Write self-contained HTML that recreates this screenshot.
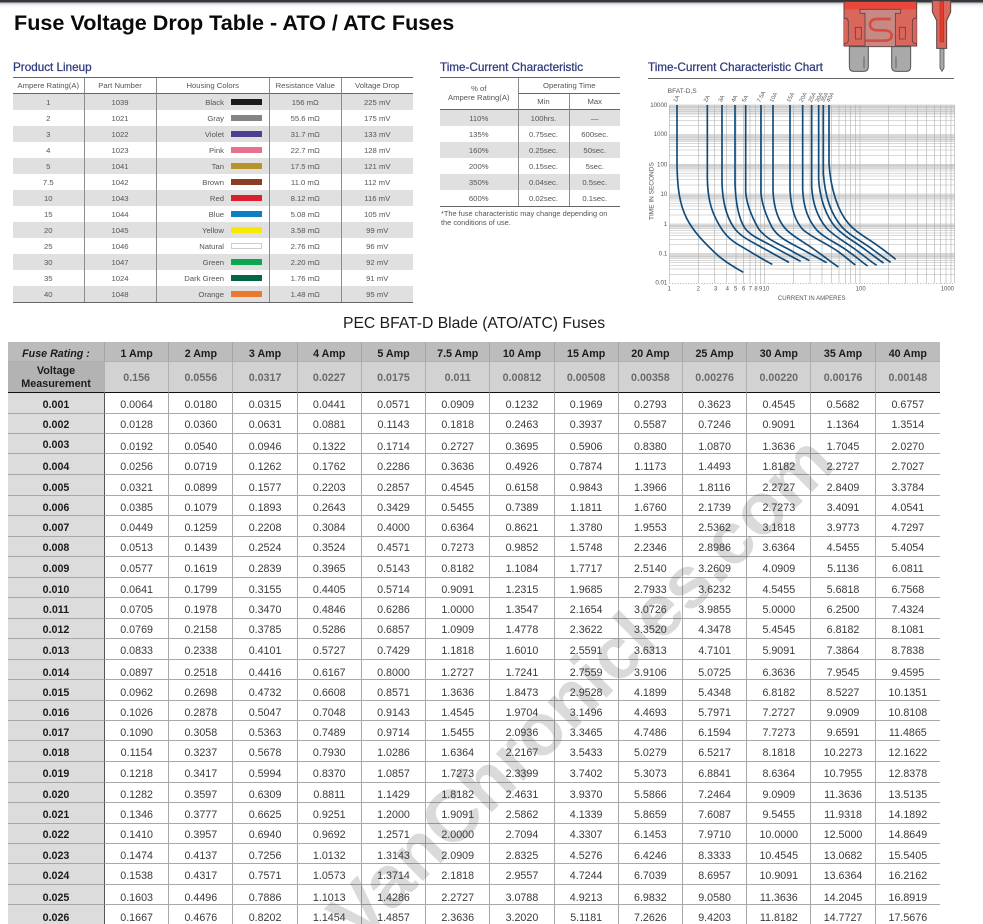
<!DOCTYPE html>
<html>
<head>
<meta charset="utf-8">
<title>Fuse Voltage Drop Table</title>
<style>
html{margin:0;padding:0;background:#fff;width:983px;height:924px;overflow:hidden}
body{margin:0;padding:0;background:#fff;position:relative;width:983px;height:924px;overflow:hidden;font-family:"Liberation Sans",sans-serif;color:#333}
.bar{position:absolute;left:0;top:0;width:983px;height:8px;background:linear-gradient(#2f3337 0,#3b3f43 2px,#c9cacb 3px,#f2f2f2 5px,#fff 8px)}
h1{position:absolute;left:14px;top:9px;margin:0;font-size:21.6px;line-height:27px;font-weight:bold;color:#0a0a0a;white-space:nowrap}
h2{position:absolute;top:61px;margin:0;font-size:11.7px;line-height:14px;font-weight:normal;color:#2e3a7c;white-space:nowrap;-webkit-text-stroke:.25px #2e3a7c}
table{border-collapse:separate;border-spacing:0;table-layout:fixed;position:absolute}
.s{font-size:7.7px;color:#555;text-align:center;border-bottom:1px solid #666;border-top:1px solid #666}
.s td,.s th{font-weight:normal;padding:0;height:16px;box-sizing:border-box;line-height:15px;vertical-align:middle;border-right:1px solid #8c8c8c;white-space:nowrap}
.s td:last-child,.s th:last-child{border-right:0}
.s thead th{border-bottom:1px solid #666}
.s tbody tr:nth-child(odd) td{background:#e0e0e0}
.c{text-align:right!important;padding-right:7px!important}
.c i{display:inline-block;width:31px;height:6px;margin-left:7px;vertical-align:-.5px;box-sizing:border-box}
.foot{position:absolute;left:441px;top:210px;font-size:7.4px;line-height:8.5px;color:#555;white-space:nowrap}
.sub{position:absolute;left:343px;top:314px;font-size:15.7px;line-height:19px;color:#1c1c1c;white-space:nowrap}
.m{left:8px;top:342px;width:932px;font-size:10.7px;color:#3a3a3a;text-align:center}
.m td,.m th{padding:0;border-right:1px solid #a8a8a8;border-bottom:1px solid #a8a8a8;box-sizing:border-box;vertical-align:top;line-height:12px;overflow:hidden;white-space:nowrap}
.m td:last-child,.m th:last-child{border-right:0}
.m tbody td:first-child{background:#dcdcdc;font-weight:bold;color:#1c1c1c;border-right:1px solid #555}
.m .h1 th{background:#bbbcbb;color:#1c1c1c;height:20px;line-height:13px;padding-top:6px;border-right-color:#a4a4a4;border-bottom:1px solid #b0b0b0}
.m .h1 th:first-child{background:#bbb;font-style:italic}
.m .h2 th{background:#d2d2d2;color:#6a6a6a;height:31px;line-height:28px;padding-top:2px;border-bottom:1px solid #111;border-right-color:#b0b0b0}
.m .h2 th:first-child{background:#b3b3b3;color:#1c1c1c;font-size:10.8px;line-height:13px;padding-top:3px}
.p2 td{padding-top:5px!important}.p3 td{padding-top:6px!important}.p4 td{padding-top:7px!important}
.wm{position:absolute;left:342px;top:883px;width:700px;font-size:73px;line-height:90px;font-weight:bold;color:rgba(60,60,60,.19);white-space:nowrap;transform:rotate(-45deg);transform-origin:0 50%}
svg{position:absolute}
svg text{font-family:"Liberation Sans",sans-serif;fill:#555}
</style>
</head>
<body>
<div class="bar"></div>

<svg style="left:820px;top:0" width="163" height="80" viewBox="0 0 489 240">
  <path d="M72 6H290V138H72Z" fill="#d9675c" stroke="#5e4140" stroke-width="3"/>
  <path d="M74 6H288V28H74Z" fill="#e8473b"/>
  <path d="M120 28V40H135V140H226V40H242V28Z" fill="#c68a86" stroke="#5e4140" stroke-width="2.5"/>
  <path d="M72 55Q84 52 85 66V122Q84 132 72 130" fill="#d9675c" stroke="#5e4140" stroke-width="2.5"/>
  <path d="M290 55Q278 52 277 66V122Q278 132 290 130" fill="#d9675c" stroke="#5e4140" stroke-width="2.5"/>
  <path d="M106 82H124V117H106ZM238 82H256V117H238Z" fill="#d9675c" stroke="#5e4140" stroke-width="2.5"/>
  <path d="M212 57H172C158 57 150 64 150 74C150 85 158 91 172 91H194C208 91 215 98 215 107C215 116 207 122 194 122H136" fill="none" stroke="#d94a3f" stroke-width="8"/>
  <path d="M88 140H145V200Q145 214 132 214H100Q88 214 88 200Z" fill="#a9a9a9" stroke="#555" stroke-width="3"/>
  <path d="M215 140H272V200Q272 214 260 214H228Q215 214 215 200Z" fill="#a9a9a9" stroke="#555" stroke-width="3"/>
  <path d="M132 170V205M228 170V205" stroke="#555" stroke-width="2.5" fill="none"/>
  <path d="M337 2H392V36L380 62V145H350V62L337 36Z" fill="#d9675c" stroke="#5e4140" stroke-width="3"/>
  <path d="M360 4H371V126H360Z" fill="#e8392f" stroke="#7a3b36" stroke-width="1.5"/>
  <path d="M360 146H372V204L366 214L360 204Z" fill="#a9a9a9" stroke="#555" stroke-width="2.5"/>
</svg>

<h1>Fuse Voltage Drop Table - ATO / ATC Fuses</h1>

<h2 style="left:13px">Product Lineup</h2>
<h2 style="left:440px">Time-Current Characteristic</h2>
<h2 style="left:648px">Time-Current Characteristic Chart</h2>
<div style="position:absolute;left:648px;top:78px;width:306px;height:1px;background:#666"></div>

<table class="s" style="left:13px;top:77px;width:400px">
<colgroup><col style="width:71.5px"><col style="width:72px"><col style="width:113.5px"><col style="width:71.5px"><col style="width:71.5px"></colgroup>
<thead><tr><th>Ampere Rating(A)</th><th>Part Number</th><th>Housing Colors</th><th>Resistance Value</th><th>Voltage Drop</th></tr></thead>
<tbody>
<tr><td>1</td><td>1039</td><td class="c">Black<i style="background:#1b1b1d"></i></td><td>156 mΩ</td><td>225 mV</td></tr>
<tr><td>2</td><td>1021</td><td class="c">Gray<i style="background:#848484"></i></td><td>55.6 mΩ</td><td>175 mV</td></tr>
<tr><td>3</td><td>1022</td><td class="c">Violet<i style="background:#4c4190"></i></td><td>31.7 mΩ</td><td>133 mV</td></tr>
<tr><td>4</td><td>1023</td><td class="c">Pink<i style="background:#e8708f"></i></td><td>22.7 mΩ</td><td>128 mV</td></tr>
<tr><td>5</td><td>1041</td><td class="c">Tan<i style="background:#b8952c"></i></td><td>17.5 mΩ</td><td>121 mV</td></tr>
<tr><td>7.5</td><td>1042</td><td class="c">Brown<i style="background:#8a3f22"></i></td><td>11.0 mΩ</td><td>112 mV</td></tr>
<tr><td>10</td><td>1043</td><td class="c">Red<i style="background:#dc1f2e"></i></td><td>8.12 mΩ</td><td>116 mV</td></tr>
<tr><td>15</td><td>1044</td><td class="c">Blue<i style="background:#0b7fc0"></i></td><td>5.08 mΩ</td><td>105 mV</td></tr>
<tr><td>20</td><td>1045</td><td class="c">Yellow<i style="background:#fbe800"></i></td><td>3.58 mΩ</td><td>99 mV</td></tr>
<tr><td>25</td><td>1046</td><td class="c">Natural<i style="background:#fff;border:1px solid #ccc"></i></td><td>2.76 mΩ</td><td>96 mV</td></tr>
<tr><td>30</td><td>1047</td><td class="c">Green<i style="background:#0ca650"></i></td><td>2.20 mΩ</td><td>92 mV</td></tr>
<tr><td>35</td><td>1024</td><td class="c">Dark Green<i style="background:#036644"></i></td><td>1.76 mΩ</td><td>91 mV</td></tr>
<tr><td>40</td><td>1048</td><td class="c">Orange<i style="background:#ea7a30"></i></td><td>1.48 mΩ</td><td>95 mV</td></tr>
</tbody>
</table>

<table class="s" style="left:440px;top:77px;width:180px">
<colgroup><col style="width:78.5px"><col style="width:51px"><col style="width:50.5px"></colgroup>
<thead>
<tr><th rowspan="2" style="line-height:8.5px">% of<br>Ampere Rating(A)</th><th colspan="2">Operating Time</th></tr>
<tr><th>Min</th><th>Max</th></tr>
</thead>
<tbody>
<tr><td>110%</td><td>100hrs.</td><td>—</td></tr>
<tr><td>135%</td><td>0.75sec.</td><td>600sec.</td></tr>
<tr><td>160%</td><td>0.25sec.</td><td>50sec.</td></tr>
<tr><td>200%</td><td>0.15sec.</td><td>5sec.</td></tr>
<tr><td>350%</td><td>0.04sec.</td><td>0.5sec.</td></tr>
<tr><td>600%</td><td>0.02sec.</td><td>0.1sec.</td></tr>
</tbody>
</table>
<div class="foot">*The fuse characteristic may change depending on<br>the conditions of use.</div>

<svg style="left:630px;top:80px" width="353" height="230" viewBox="0 0 1059 690">
  <g fill="#e4e4e4">
    <rect x="118" y="75" width="856" height="28"/>
    <rect x="118" y="165" width="856" height="18"/>
    <rect x="118" y="254" width="856" height="14"/>
    <rect x="118" y="344" width="856" height="14"/>
    <rect x="118" y="433" width="856" height="12"/>
    <rect x="118" y="522" width="856" height="12"/>
  </g>
  <path fill="none" stroke="#a6a6a6" stroke-width="1.6" d="M118 75V610M205 75V610M254 75V610M290 75V610M318 75V610M340 75V610M360 75V610M376 75V610M391 75V610M404 75V610M490 75V610M540 75V610M576 75V610M604 75V610M627 75V610M646 75V610M662 75V610M677 75V610M690 75V610M776 75V610M826 75V610M862 75V610M890 75V610M913 75V610M932 75V610M948 75V610M963 75V610M974 75V610"/>
  <path fill="none" stroke="#b4b4b4" stroke-width="1.6" d="M118 75H974M118 79H974M118 83H974M118 89H974M118 95H974M118 102H974M118 110H974M118 121H974M118 137H974M118 164H974M118 168H974M118 172H974M118 178H974M118 184H974M118 191H974M118 199H974M118 210H974M118 226H974M118 253H974M118 257H974M118 261H974M118 267H974M118 273H974M118 280H974M118 288H974M118 299H974M118 315H974M118 342H974M118 347H974M118 351H974M118 357H974M118 363H974M118 370H974M118 378H974M118 389H974M118 405H974M118 432H974M118 436H974M118 440H974M118 446H974M118 452H974M118 459H974M118 467H974M118 478H974M118 494H974M118 521H974M118 525H974M118 529H974M118 535H974M118 541H974M118 548H974M118 556H974M118 567H974M118 583H974"/>
  <path fill="none" stroke="#888" stroke-width="2" stroke-dasharray="3 5" d="M118 610H974"/>
  <g fill="none" stroke="#0f4c7c" stroke-width="5">
    <path d="M141 75V250C142 330 150 375 170 415C190 455 225 490 262 525C285 545 315 563 340 577"/>
    <path d="M232 75V295C233 345 240 385 262 425C280 460 300 480 330 497C365 517 395 537 427 553"/>
    <path d="M276 75V310C278 370 290 410 310 440C330 470 360 482 395 502C425 518 450 533 477 547"/>
    <path d="M315 75V310C317 370 325 415 345 445C365 470 395 480 430 500C460 517 485 530 512 544"/>
    <path d="M347 75V335C350 375 365 410 385 445C410 480 445 490 480 510C500 522 520 532 538 542"/>
    <path d="M393 75V340C396 375 410 410 425 440C445 475 480 488 520 510C545 524 568 536 590 548"/>
    <path d="M429 75V335C432 385 445 425 470 450C490 470 520 485 555 510C580 528 603 546 625 561"/>
    <path d="M480 75V330C483 385 495 425 520 450C550 475 590 490 625 515C643 528 660 543 676 555"/>
    <path d="M518 75V330C521 385 535 420 560 450C590 480 625 490 660 518C680 532 697 547 713 558"/>
    <path d="M545 75V320C548 375 565 415 590 445C620 475 650 488 685 515C705 530 723 545 740 556"/>
    <path d="M566 75V300C570 360 590 410 615 440C645 472 675 485 710 512C728 525 745 539 761 549"/>
    <path d="M580 75V280C585 350 605 405 635 440C660 468 695 483 730 510C748 523 766 537 782 547"/>
    <path d="M597 75V250C602 330 625 395 655 430C680 460 715 475 750 502C768 515 785 528 797 538"/>
  </g>
  <g font-size="17">
    <text x="113" y="39" font-size="20">BFAT-D,S</text>
    <text transform="translate(139 68) rotate(-62)">1A</text>
    <text transform="translate(230 68) rotate(-62)">2A</text>
    <text transform="translate(274 68) rotate(-62)">3A</text>
    <text transform="translate(313 68) rotate(-62)">4A</text>
    <text transform="translate(345 68) rotate(-62)">5A</text>
    <text transform="translate(390 68) rotate(-62)">7.5A</text>
    <text transform="translate(428 68) rotate(-62)">10A</text>
    <text transform="translate(479 68) rotate(-62)">15A</text>
    <text transform="translate(517 68) rotate(-62)">20A</text>
    <text transform="translate(544 68) rotate(-62)">25A</text>
    <text transform="translate(565 68) rotate(-62)">30A</text>
    <text transform="translate(581 68) rotate(-62)">35A</text>
    <text transform="translate(598 68) rotate(-62)">40A</text>
    <g text-anchor="end" font-size="18.5">
      <text x="112" y="81">10000</text><text x="112" y="168">1000</text><text x="112" y="259">100</text>
      <text x="112" y="348">10</text><text x="112" y="438">1</text><text x="112" y="526">0.1</text><text x="112" y="614">0.01</text>
    </g>
    <g text-anchor="middle" font-size="18">
      <text x="118" y="631">1</text><text x="205" y="631">2</text><text x="257" y="631">3</text><text x="292" y="631">4</text><text x="317" y="631">5</text><text x="341" y="631">6</text><text x="361" y="631">7</text><text x="378" y="631">8</text><text x="392" y="631">9</text><text x="408" y="631">10</text><text x="692" y="631">100</text><text x="952" y="631">1000</text>
      <text x="545" y="660">CURRENT IN AMPERES</text>
    </g>
    <text transform="translate(71 420) rotate(-90)" font-size="19.5">TIME IN SECONDS</text>
  </g>
</svg>

<div class="sub">PEC BFAT-D Blade (ATO/ATC) Fuses</div>

<table class="m">
<colgroup><col style="width:97px"><col span="13" style="width:64.23px"></colgroup>
<thead>
<tr class="h1"><th>Fuse Rating :</th><th>1 Amp</th><th>2 Amp</th><th>3 Amp</th><th>4 Amp</th><th>5 Amp</th><th>7.5 Amp</th><th>10 Amp</th><th>15 Amp</th><th>20 Amp</th><th>25 Amp</th><th>30 Amp</th><th>35 Amp</th><th>40 Amp</th></tr>
<tr class="h2"><th>Voltage<br>Measurement</th><th>0.156</th><th>0.0556</th><th>0.0317</th><th>0.0227</th><th>0.0175</th><th>0.011</th><th>0.00812</th><th>0.00508</th><th>0.00358</th><th>0.00276</th><th>0.00220</th><th>0.00176</th><th>0.00148</th></tr>
</thead>
<tbody>
<tr class="p3" style="height:21px"><td>0.001</td><td>0.0064</td><td>0.0180</td><td>0.0315</td><td>0.0441</td><td>0.0571</td><td>0.0909</td><td>0.1232</td><td>0.1969</td><td>0.2793</td><td>0.3623</td><td>0.4545</td><td>0.5682</td><td>0.6757</td></tr>
<tr class="p2" style="height:20px"><td>0.002</td><td>0.0128</td><td>0.0360</td><td>0.0631</td><td>0.0881</td><td>0.1143</td><td>0.1818</td><td>0.2463</td><td>0.3937</td><td>0.5587</td><td>0.7246</td><td>0.9091</td><td>1.1364</td><td>1.3514</td></tr>
<tr class="p4" style="height:20px"><td style="padding-top:5px!important">0.003</td><td>0.0192</td><td>0.0540</td><td>0.0946</td><td>0.1322</td><td>0.1714</td><td>0.2727</td><td>0.3695</td><td>0.5906</td><td>0.8380</td><td>1.0870</td><td>1.3636</td><td>1.7045</td><td>2.0270</td></tr>
<tr class="p4" style="height:21px"><td>0.004</td><td>0.0256</td><td>0.0719</td><td>0.1262</td><td>0.1762</td><td>0.2286</td><td>0.3636</td><td>0.4926</td><td>0.7874</td><td>1.1173</td><td>1.4493</td><td>1.8182</td><td>2.2727</td><td>2.7027</td></tr>
<tr class="p4" style="height:21px"><td>0.005</td><td>0.0321</td><td>0.0899</td><td>0.1577</td><td>0.2203</td><td>0.2857</td><td>0.4545</td><td>0.6158</td><td>0.9843</td><td>1.3966</td><td>1.8116</td><td>2.2727</td><td>2.8409</td><td>3.3784</td></tr>
<tr class="p3" style="height:20px"><td>0.006</td><td>0.0385</td><td>0.1079</td><td>0.1893</td><td>0.2643</td><td>0.3429</td><td>0.5455</td><td>0.7389</td><td>1.1811</td><td>1.6760</td><td>2.1739</td><td>2.7273</td><td>3.4091</td><td>4.0541</td></tr>
<tr class="p3" style="height:21px"><td>0.007</td><td>0.0449</td><td>0.1259</td><td>0.2208</td><td>0.3084</td><td>0.4000</td><td>0.6364</td><td>0.8621</td><td>1.3780</td><td>1.9553</td><td>2.5362</td><td>3.1818</td><td>3.9773</td><td>4.7297</td></tr>
<tr class="p2" style="height:20px"><td>0.008</td><td>0.0513</td><td>0.1439</td><td>0.2524</td><td>0.3524</td><td>0.4571</td><td>0.7273</td><td>0.9852</td><td>1.5748</td><td>2.2346</td><td>2.8986</td><td>3.6364</td><td>4.5455</td><td>5.4054</td></tr>
<tr class="p3" style="height:21px"><td>0.009</td><td>0.0577</td><td>0.1619</td><td>0.2839</td><td>0.3965</td><td>0.5143</td><td>0.8182</td><td>1.1084</td><td>1.7717</td><td>2.5140</td><td>3.2609</td><td>4.0909</td><td>5.1136</td><td>6.0811</td></tr>
<tr class="p3" style="height:20px"><td>0.010</td><td>0.0641</td><td>0.1799</td><td>0.3155</td><td>0.4405</td><td>0.5714</td><td>0.9091</td><td>1.2315</td><td>1.9685</td><td>2.7933</td><td>3.6232</td><td>4.5455</td><td>5.6818</td><td>6.7568</td></tr>
<tr class="p3" style="height:21px"><td>0.011</td><td>0.0705</td><td>0.1978</td><td>0.3470</td><td>0.4846</td><td>0.6286</td><td>1.0000</td><td>1.3547</td><td>2.1654</td><td>3.0726</td><td>3.9855</td><td>5.0000</td><td>6.2500</td><td>7.4324</td></tr>
<tr class="p2" style="height:20px"><td>0.012</td><td>0.0769</td><td>0.2158</td><td>0.3785</td><td>0.5286</td><td>0.6857</td><td>1.0909</td><td>1.4778</td><td>2.3622</td><td>3.3520</td><td>4.3478</td><td>5.4545</td><td>6.8182</td><td>8.1081</td></tr>
<tr class="p3" style="height:21px"><td>0.013</td><td>0.0833</td><td>0.2338</td><td>0.4101</td><td>0.5727</td><td>0.7429</td><td>1.1818</td><td>1.6010</td><td>2.5591</td><td>3.6313</td><td>4.7101</td><td>5.9091</td><td>7.3864</td><td>8.7838</td></tr>
<tr class="p4" style="height:20px"><td>0.014</td><td>0.0897</td><td>0.2518</td><td>0.4416</td><td>0.6167</td><td>0.8000</td><td>1.2727</td><td>1.7241</td><td>2.7559</td><td>3.9106</td><td>5.0725</td><td>6.3636</td><td>7.9545</td><td>9.4595</td></tr>
<tr class="p4" style="height:21px"><td>0.015</td><td>0.0962</td><td>0.2698</td><td>0.4732</td><td>0.6608</td><td>0.8571</td><td>1.3636</td><td>1.8473</td><td>2.9528</td><td>4.1899</td><td>5.4348</td><td>6.8182</td><td>8.5227</td><td>10.1351</td></tr>
<tr class="p3" style="height:20px"><td>0.016</td><td>0.1026</td><td>0.2878</td><td>0.5047</td><td>0.7048</td><td>0.9143</td><td>1.4545</td><td>1.9704</td><td>3.1496</td><td>4.4693</td><td>5.7971</td><td>7.2727</td><td>9.0909</td><td>10.8108</td></tr>
<tr class="p3" style="height:20px"><td>0.017</td><td>0.1090</td><td>0.3058</td><td>0.5363</td><td>0.7489</td><td>0.9714</td><td>1.5455</td><td>2.0936</td><td>3.3465</td><td>4.7486</td><td>6.1594</td><td>7.7273</td><td>9.6591</td><td>11.4865</td></tr>
<tr class="p3" style="height:21px"><td>0.018</td><td>0.1154</td><td>0.3237</td><td>0.5678</td><td>0.7930</td><td>1.0286</td><td>1.6364</td><td>2.2167</td><td>3.5433</td><td>5.0279</td><td>6.5217</td><td>8.1818</td><td>10.2273</td><td>12.1622</td></tr>
<tr class="p3" style="height:21px"><td>0.019</td><td>0.1218</td><td>0.3417</td><td>0.5994</td><td>0.8370</td><td>1.0857</td><td>1.7273</td><td>2.3399</td><td>3.7402</td><td>5.3073</td><td>6.8841</td><td>8.6364</td><td>10.7955</td><td>12.8378</td></tr>
<tr class="p3" style="height:20px"><td>0.020</td><td>0.1282</td><td>0.3597</td><td>0.6309</td><td>0.8811</td><td>1.1429</td><td>1.8182</td><td>2.4631</td><td>3.9370</td><td>5.5866</td><td>7.2464</td><td>9.0909</td><td>11.3636</td><td>13.5135</td></tr>
<tr class="p3" style="height:21px"><td>0.021</td><td>0.1346</td><td>0.3777</td><td>0.6625</td><td>0.9251</td><td>1.2000</td><td>1.9091</td><td>2.5862</td><td>4.1339</td><td>5.8659</td><td>7.6087</td><td>9.5455</td><td>11.9318</td><td>14.1892</td></tr>
<tr class="p2" style="height:20px"><td>0.022</td><td>0.1410</td><td>0.3957</td><td>0.6940</td><td>0.9692</td><td>1.2571</td><td>2.0000</td><td>2.7094</td><td>4.3307</td><td>6.1453</td><td>7.9710</td><td>10.0000</td><td>12.5000</td><td>14.8649</td></tr>
<tr class="p3" style="height:20px"><td>0.023</td><td>0.1474</td><td>0.4137</td><td>0.7256</td><td>1.0132</td><td>1.3143</td><td>2.0909</td><td>2.8325</td><td>4.5276</td><td>6.4246</td><td>8.3333</td><td>10.4545</td><td>13.0682</td><td>15.5405</td></tr>
<tr class="p3" style="height:21px"><td>0.024</td><td>0.1538</td><td>0.4317</td><td>0.7571</td><td>1.0573</td><td>1.3714</td><td>2.1818</td><td>2.9557</td><td>4.7244</td><td>6.7039</td><td>8.6957</td><td>10.9091</td><td>13.6364</td><td>16.2162</td></tr>
<tr class="p4" style="height:20px"><td>0.025</td><td>0.1603</td><td>0.4496</td><td>0.7886</td><td>1.1013</td><td>1.4286</td><td>2.2727</td><td>3.0788</td><td>4.9213</td><td>6.9832</td><td>9.0580</td><td>11.3636</td><td>14.2045</td><td>16.8919</td></tr>
<tr class="p4" style="height:21px"><td>0.026</td><td>0.1667</td><td>0.4676</td><td>0.8202</td><td>1.1454</td><td>1.4857</td><td>2.3636</td><td>3.2020</td><td>5.1181</td><td>7.2626</td><td>9.4203</td><td>11.8182</td><td>14.7727</td><td>17.5676</td></tr>
</tbody>
</table>

<div class="wm">VanChronicles.com</div>
</body>
</html>
